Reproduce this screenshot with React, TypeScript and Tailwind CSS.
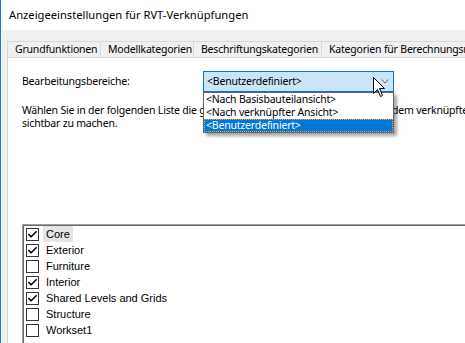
import { Check } from 'lucide-react';

const tabs = [
  { label: 'Grundfunktionen', w: 'w-[94px]' },
  { label: 'Modellkategorien', w: 'w-[94px]' },
  { label: 'Beschriftungskategorien', w: 'w-[129px]' },
  { label: 'Kategorien für Berechnungsmodell', w: 'w-[200px]' },
];

const worksets = [
  { name: 'Core', checked: true, selected: true },
  { name: 'Exterior', checked: true },
  { name: 'Furniture', checked: false },
  { name: 'Interior', checked: true },
  { name: 'Shared Levels and Grids', checked: true },
  { name: 'Structure', checked: false },
  { name: 'Workset1', checked: false },
];

const options = ['<Nach Basisbauteilansicht>', '<Nach verknüpfter Ansicht>', '<Benutzerdefiniert>'];

const Cursor = () => (
  <svg width="13" height="21" viewBox="0 0 13 21" className="absolute left-[372px] top-[77px] z-30">
    <path d="M0.5 0.5 L0.5 16.5 L4.5 12.5 L7.5 19.5 L9.5 18.5 L6.5 11.5 L11.5 11.5 Z" fill="#fff" stroke="#000" strokeWidth="1" />
  </svg>
);

const App = () => {
  return (
    <div className="relative w-[465px] h-[343px] overflow-hidden bg-[#f0f0f0] border-l border-[#1c7ad4] text-[10.5px] tracking-[-0.2px] text-black font-['Noto_Sans',sans-serif]">
      {/* title bar */}
      <div className="h-[30px] bg-white flex items-center pl-[8px] text-[11.2px] tracking-normal leading-none">
        Anzeigeeinstellungen für RVT-Verknüpfungen
      </div>

      <div className="pt-[11px] pl-[6px]">
        {/* tabs */}
        <div className="flex h-[16px] w-[600px]">
          {tabs.map((t) => (
            <div
              key={t.label}
              className={`${t.w} shrink-0 border-t border-l border-r border-[#d9d9d9] -mr-px flex items-center pl-[7px] whitespace-nowrap leading-none`}
            >
              {t.label}
            </div>
          ))}
        </div>

        {/* tab panel */}
        <div className="h-[300px] w-[600px] bg-white border-t border-l border-[#d9d9d9] pl-[14px] pt-[13px]">
          <div className="flex items-center">
            <div className="w-[181px] shrink-0 leading-none">Bearbeitungsbereiche:</div>
            <div className="relative z-20 w-[191px] shrink-0">
              <div className="h-[21px] bg-[#cce4f7] border border-[#0078d7] flex items-center justify-between pl-[3px] pr-[4px] leading-none">
                <span>&lt;Benutzerdefiniert&gt;</span>
                <svg width="8" height="5" viewBox="0 0 8 5">
                  <path d="M0.5 0.5 L4 4 L7.5 0.5" fill="none" stroke="#606060" strokeWidth="1" />
                </svg>
              </div>
              <div className="absolute left-0 top-[21px] w-[191px] bg-white border border-[#646464] shadow-[3px_3px_3px_rgba(0,0,0,0.35)]">
                {options.map((o, i) => (
                  <div
                    key={o}
                    className={
                      i === 2
                        ? 'h-[13px] flex items-center pl-[2px] leading-none bg-[#0078d7] text-white outline-1 outline-dotted outline-[#f5a347] -outline-offset-1'
                        : 'h-[13px] flex items-center pl-[2px] leading-none'
                    }
                  >
                    {o}
                  </div>
                ))}
              </div>
            </div>
          </div>

          <div className="mt-[12px] leading-[13px]">
            <div className="whitespace-nowrap">
              Wählen Sie in der folgenden Liste die gewünschten Bereiche aus, um diese in{' '}
              <span className="ml-[3px]">dem verknüpften Modell</span>
            </div>
            <div>sichtbar zu machen.</div>
          </div>

          {/* workset checklist */}
          <div className="mt-[94px] w-[560px] h-[200px] border border-[#a0a0a0]">
            <div className="h-full border border-[#696969] bg-white font-['Liberation_Sans',sans-serif] text-[11px] tracking-normal">
              {worksets.map((w) => (
                <div key={w.name} className="h-[16px] flex items-center pl-[2px]">
                  <div className="w-[13px] h-[13px] border border-[#333] bg-white flex items-center justify-center shrink-0">
                    {w.checked && <Check className="w-[11px] h-[11px] text-black" strokeWidth={3.5} />}
                  </div>
                  <div className={`ml-[4px] h-[16px] flex items-center px-[3px] ${w.selected ? 'bg-[#e5e5e5]' : ''}`}>
                    {w.name}
                  </div>
                </div>
              ))}
            </div>
          </div>
        </div>
      </div>

      <Cursor />
    </div>
  );
};

export default App;
